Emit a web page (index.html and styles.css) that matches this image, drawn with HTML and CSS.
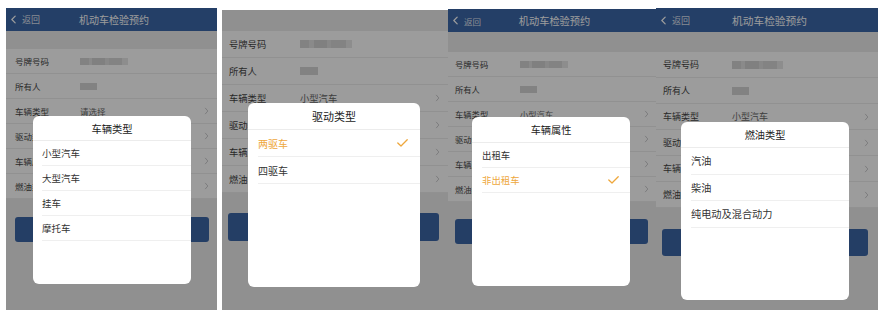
FILE: index.html
```html
<!DOCTYPE html>
<html lang="zh-CN">
<head>
<meta charset="utf-8">
<title>机动车检验预约</title>
<link rel="stylesheet" href="styles.css">
</head>
<body>
<main class="shots">

  <!-- Panel 1 -->
  <section class="phone phone--1">
    <header class="nav">
      <span class="nav__back"><svg class="nav__chev" viewBox="0 0 6 10"><polyline points="5,1 1,5 5,9"/></svg>返回</span>
      <span class="nav__title">机动车检验预约</span>
      <span></span>
    </header>
    <div class="gap"></div>
    <ul class="list">
      <li class="row"><span class="row__label">号牌号码</span><span class="blur blur--plate"></span></li>
      <li class="row"><span class="row__label">所有人</span><span class="blur blur--owner"></span></li>
      <li class="row"><span class="row__label">车辆类型</span><span class="row__value">请选择</span><svg class="row__chev" viewBox="0 0 5 9"><polyline points="1,1 4,4.5 1,8"/></svg></li>
      <li class="row"><span class="row__label">驱动类型</span><span></span><svg class="row__chev" viewBox="0 0 5 9"><polyline points="1,1 4,4.5 1,8"/></svg></li>
      <li class="row"><span class="row__label">车辆属性</span><span></span><svg class="row__chev" viewBox="0 0 5 9"><polyline points="1,1 4,4.5 1,8"/></svg></li>
      <li class="row"><span class="row__label">燃油类型</span><span></span><svg class="row__chev" viewBox="0 0 5 9"><polyline points="1,1 4,4.5 1,8"/></svg></li>
    </ul>
    <div class="action"><button class="btn" type="button" aria-label="下一步"></button></div>
    <div class="mask">
      <div class="sheet">
        <div class="sheet__title">车辆类型</div>
        <ul class="sheet__list">
          <li class="opt">小型汽车</li>
          <li class="opt">大型汽车</li>
          <li class="opt">挂车</li>
          <li class="opt">摩托车</li>
        </ul>
      </div>
    </div>
  </section>

  <!-- Panel 2 -->
  <section class="phone phone--2">
    <div class="gap"></div>
    <ul class="list">
      <li class="row"><span class="row__label">号牌号码</span><span class="blur blur--plate"></span></li>
      <li class="row"><span class="row__label">所有人</span><span class="blur blur--owner"></span></li>
      <li class="row"><span class="row__label">车辆类型</span><span class="row__value">小型汽车</span><svg class="row__chev" viewBox="0 0 5 9"><polyline points="1,1 4,4.5 1,8"/></svg></li>
      <li class="row"><span class="row__label">驱动类型</span><span></span><svg class="row__chev" viewBox="0 0 5 9"><polyline points="1,1 4,4.5 1,8"/></svg></li>
      <li class="row"><span class="row__label">车辆属性</span><span></span><svg class="row__chev" viewBox="0 0 5 9"><polyline points="1,1 4,4.5 1,8"/></svg></li>
      <li class="row"><span class="row__label">燃油类型</span><span></span><svg class="row__chev" viewBox="0 0 5 9"><polyline points="1,1 4,4.5 1,8"/></svg></li>
    </ul>
    <div class="action"><button class="btn" type="button" aria-label="下一步"></button></div>
    <div class="mask">
      <div class="sheet">
        <div class="sheet__title">驱动类型</div>
        <ul class="sheet__list">
          <li class="opt opt--on">两驱车<svg class="opt__check" viewBox="0 0 11 8"><polyline points="0.8,4 4,7 10.2,0.8"/></svg></li>
          <li class="opt">四驱车</li>
        </ul>
      </div>
    </div>
  </section>

  <!-- Panel 3 -->
  <section class="phone phone--3">
    <header class="nav">
      <span class="nav__back"><svg class="nav__chev" viewBox="0 0 6 10"><polyline points="5,1 1,5 5,9"/></svg>返回</span>
      <span class="nav__title">机动车检验预约</span>
      <span></span>
    </header>
    <div class="gap"></div>
    <ul class="list">
      <li class="row"><span class="row__label">号牌号码</span><span class="blur blur--plate"></span></li>
      <li class="row"><span class="row__label">所有人</span><span class="blur blur--owner"></span></li>
      <li class="row"><span class="row__label">车辆类型</span><span class="row__value">小型汽车</span><svg class="row__chev" viewBox="0 0 5 9"><polyline points="1,1 4,4.5 1,8"/></svg></li>
      <li class="row"><span class="row__label">驱动类型</span><span></span><svg class="row__chev" viewBox="0 0 5 9"><polyline points="1,1 4,4.5 1,8"/></svg></li>
      <li class="row"><span class="row__label">车辆属性</span><span></span><svg class="row__chev" viewBox="0 0 5 9"><polyline points="1,1 4,4.5 1,8"/></svg></li>
      <li class="row"><span class="row__label">燃油类型</span><span></span><svg class="row__chev" viewBox="0 0 5 9"><polyline points="1,1 4,4.5 1,8"/></svg></li>
    </ul>
    <div class="action"><button class="btn" type="button" aria-label="下一步"></button></div>
    <div class="mask">
      <div class="sheet">
        <div class="sheet__title">车辆属性</div>
        <ul class="sheet__list">
          <li class="opt">出租车</li>
          <li class="opt opt--on">非出租车<svg class="opt__check" viewBox="0 0 11 8"><polyline points="0.8,4 4,7 10.2,0.8"/></svg></li>
        </ul>
      </div>
    </div>
  </section>

  <!-- Panel 4 -->
  <section class="phone phone--4">
    <header class="nav">
      <span class="nav__back"><svg class="nav__chev" viewBox="0 0 6 10"><polyline points="5,1 1,5 5,9"/></svg>返回</span>
      <span class="nav__title">机动车检验预约</span>
      <span></span>
    </header>
    <div class="gap"></div>
    <ul class="list">
      <li class="row"><span class="row__label">号牌号码</span><span class="blur blur--plate"></span></li>
      <li class="row"><span class="row__label">所有人</span><span class="blur blur--owner"></span></li>
      <li class="row"><span class="row__label">车辆类型</span><span class="row__value">小型汽车</span><svg class="row__chev" viewBox="0 0 5 9"><polyline points="1,1 4,4.5 1,8"/></svg></li>
      <li class="row"><span class="row__label">驱动类型</span><span></span><svg class="row__chev" viewBox="0 0 5 9"><polyline points="1,1 4,4.5 1,8"/></svg></li>
      <li class="row"><span class="row__label">车辆属性</span><span></span><svg class="row__chev" viewBox="0 0 5 9"><polyline points="1,1 4,4.5 1,8"/></svg></li>
      <li class="row"><span class="row__label">燃油类型</span><span></span><svg class="row__chev" viewBox="0 0 5 9"><polyline points="1,1 4,4.5 1,8"/></svg></li>
    </ul>
    <div class="action"><button class="btn" type="button" aria-label="下一步"></button></div>
    <div class="mask">
      <div class="sheet">
        <div class="sheet__title">燃油类型</div>
        <ul class="sheet__list">
          <li class="opt">汽油</li>
          <li class="opt">柴油</li>
          <li class="opt">纯电动及混合动力</li>
        </ul>
      </div>
    </div>
  </section>

</main>
</body>
</html>
```

FILE: styles.css
```css
* {
  box-sizing: border-box;
  margin: 0;
  padding: 0;
}

body {
  background: #fff;
  font-family: "Noto Sans CJK SC", "Noto Sans", sans-serif;
  color: #333;
}

.shots {
  display: flex;
  align-items: flex-start;
  padding-left: 6px;
}

/* ---------- phone screen ---------- */
.phone {
  position: relative;
  flex: none;
  display: flex;
  flex-direction: column;
  overflow: hidden;
  width: var(--w);
  height: var(--h);
  margin-top: var(--top);
  margin-left: var(--ml, 0);
  background: #ececec;
}

.phone--1 {
  --w: 211px; --h: 302px; --top: 8px;
  --nav-h: 23px; --nav-fs: 10px; --back-fs: 9px;
  --gap-h: 18px; --row-h: 25px; --fs: 8.5px;
  --pl: 9px; --lab: 65px; --pr: 8px;
  --plate: 48px; --owner: 17px; --blur-h: 7px;
  --sp: 18px; --bpl: 9px; --bpr: 8px; --bh: 25px;
  --sx: 27px; --sy: 108px; --sw: 158px; --sh: 168px;
  --sth: 25px; --st-fs: 10.3px; --oh: 25px; --opt-fs: 9.5px; --opl: 9px; --opr: 10px;
}

.phone--2 {
  --w: 226px; --h: 300px; --top: 10px; --ml: 5px;
  --gap-h: 21px; --row-h: 27px; --fs: 9.3px;
  --pl: 7px; --lab: 71px; --pr: 8px;
  --plate: 52px; --owner: 18px; --blur-h: 8px;
  --sp: 20px; --bpl: 6px; --bpr: 9px; --bh: 28px;
  --sx: 26px; --sy: 93px; --sw: 172px; --sh: 184px;
  --sth: 27px; --st-fs: 11px; --oh: 27px; --opt-fs: 10px; --opl: 10px; --opr: 12px;
}

.phone--3 {
  --w: 208px; --h: 301px; --top: 9px;
  --nav-h: 23px; --nav-fs: 10.2px; --back-fs: 8.5px;
  --gap-h: 20px; --row-h: 25px; --fs: 8.3px;
  --pl: 7px; --lab: 65px; --pr: 7px;
  --plate: 48px; --owner: 17px; --blur-h: 7px;
  --sp: 17px; --bpl: 7px; --bpr: 8px; --bh: 25px;
  --sx: 24px; --sy: 108px; --sw: 158px; --sh: 169px;
  --sth: 26px; --st-fs: 10.2px; --oh: 25px; --opt-fs: 9.4px; --opl: 10px; --opr: 11px;
}

.phone--4 {
  --w: 222px; --h: 302px; --top: 8px;
  --nav-h: 24px; --nav-fs: 10.7px; --back-fs: 9px;
  --gap-h: 20px; --row-h: 26px; --fs: 9px;
  --pl: 7px; --lab: 69px; --pr: 9px;
  --plate: 51px; --owner: 17px; --blur-h: 8px;
  --sp: 21px; --bpl: 6px; --bpr: 10px; --bh: 27px;
  --sx: 25px; --sy: 114px; --sw: 168px; --sh: 178px;
  --sth: 26px; --st-fs: 10.2px; --oh: 26.5px; --opt-fs: 10.2px; --opl: 10px; --opr: 10px;
}

/* ---------- nav bar ---------- */
.nav {
  flex: none;
  height: var(--nav-h);
  background: #3b67a8;
  color: #fff;
  display: grid;
  grid-template-columns: 1fr auto 1fr;
  align-items: center;
  padding-left: 5px;
}

.nav__back {
  display: flex;
  align-items: center;
  gap: 6px;
  font-size: var(--back-fs);
  color: rgba(255, 255, 255, 0.85);
}

.nav__chev {
  width: 5px;
  height: 9px;
  fill: none;
  stroke: #fff;
  stroke-width: 1.5;
  stroke-linecap: round;
  stroke-linejoin: round;
}

.nav__title {
  font-size: var(--nav-fs);
  white-space: nowrap;
}

/* ---------- list ---------- */
.gap {
  flex: none;
  height: var(--gap-h);
}

.list {
  list-style: none;
  background: #fff;
  flex: none;
}

.row {
  height: var(--row-h);
  display: grid;
  grid-template-columns: var(--lab) 1fr auto;
  align-items: center;
  padding: 0 var(--pr) 0 var(--pl);
  border-bottom: 1px solid #ededed;
  font-size: var(--fs);
  white-space: nowrap;
}

.row__label {
  color: #444;
}

.row__value {
  color: #666;
}

.row__chev {
  grid-column: 3;
  width: 5px;
  height: 8px;
  fill: none;
  stroke: #c4c4c8;
  stroke-width: 1;
}

.blur {
  display: block;
  height: var(--blur-h);
  filter: blur(0.7px);
  background: linear-gradient(90deg,
    #d4d4d4 0 18%, #e2e2e2 18% 26%, #d2d2d2 26% 52%,
    #dedede 52% 60%, #d6d6d6 60% 88%, #e6e6e6 88% 100%);
}

.blur--plate { width: var(--plate); }
.blur--owner { width: var(--owner); background: #d4d4d4; }

/* ---------- button ---------- */
.action {
  flex: none;
  padding: var(--sp) var(--bpr) 0 var(--bpl);
}

.btn {
  display: block;
  width: 100%;
  height: var(--bh);
  border: 0;
  border-radius: 3px;
  background: #3b66a6;
}

/* ---------- modal ---------- */
.mask {
  position: absolute;
  inset: 0;
  background: rgba(0, 0, 0, 0.39);
  display: flex;
  align-items: flex-start;
  padding: var(--sy) 0 0 var(--sx);
}

.sheet {
  flex: none;
  width: var(--sw);
  height: var(--sh);
  background: #fff;
  border-radius: 6px;
  overflow: hidden;
}

.sheet__title {
  height: var(--sth);
  display: flex;
  align-items: center;
  justify-content: center;
  font-size: var(--st-fs);
  color: #222;
  border-bottom: 1px solid #ececec;
}

.sheet__list {
  list-style: none;
  padding-left: var(--opl);
}

.opt {
  height: var(--oh);
  display: flex;
  align-items: center;
  justify-content: space-between;
  padding-right: var(--opr);
  border-bottom: 1px solid #efefef;
  font-size: var(--opt-fs);
  color: #333;
}

.opt--on {
  color: #eea73c;
}

.opt__check {
  width: 11px;
  height: 8px;
  fill: none;
  stroke: #eea73c;
  stroke-width: 1.3;
  stroke-linecap: round;
  stroke-linejoin: round;
}
```
